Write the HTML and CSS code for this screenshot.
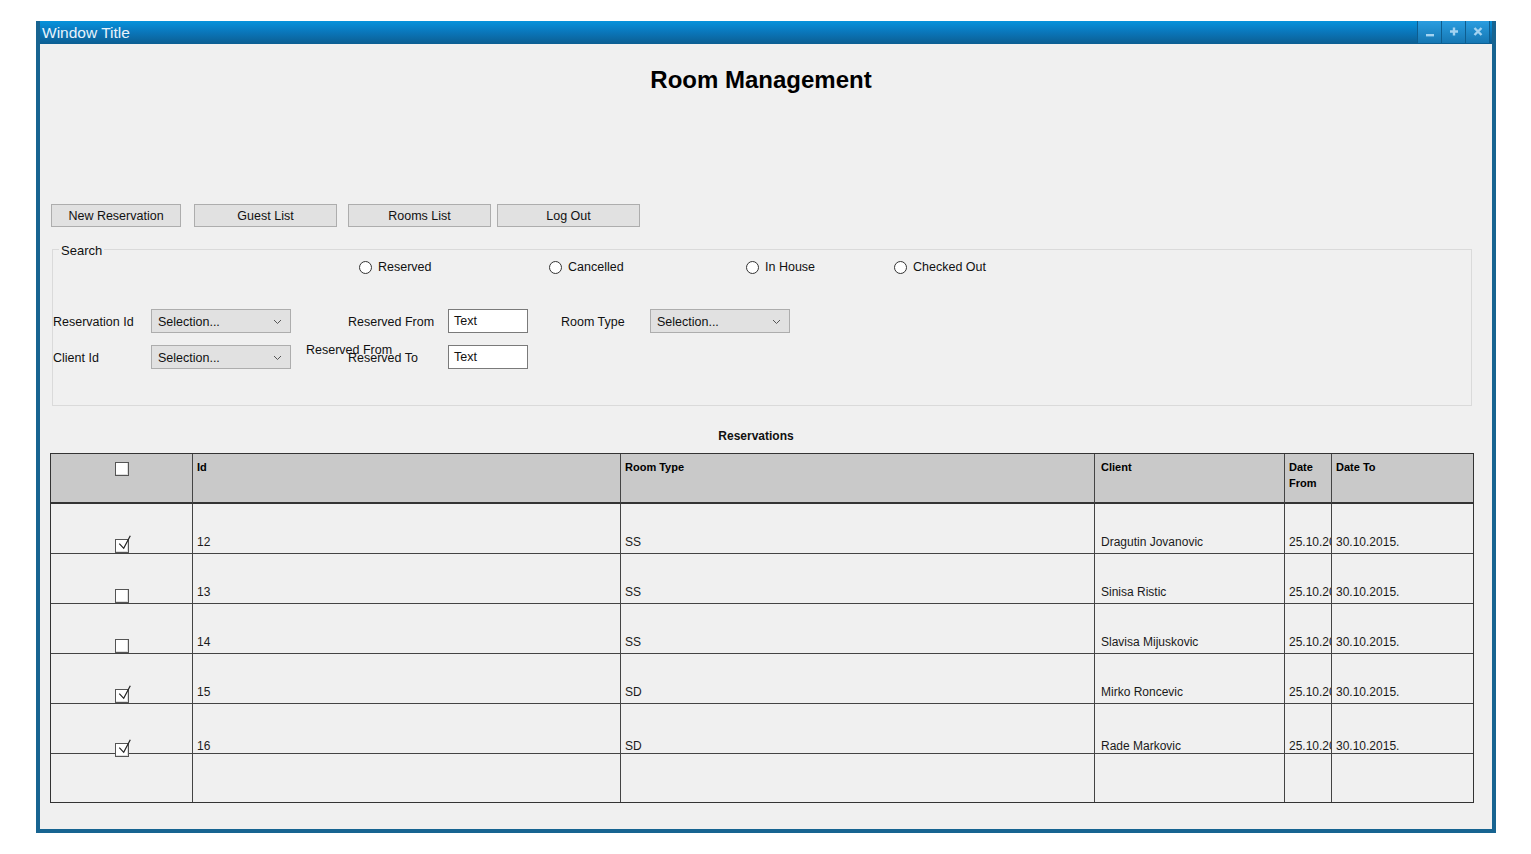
FILE: index.html
```html
<!DOCTYPE html>
<html lang="en">
<head>
<meta charset="utf-8">
<title>Room Management</title>
<link rel="stylesheet" href="styles.css">
</head>
<body>
<div class="window">
  <div class="titlebar">
    <span class="title">Window Title</span>
    <div class="controls">
      <span class="ctl"><svg width="24" height="22" viewBox="0 0 24 22"><rect x="8" y="13" width="8" height="2.4" fill="#a3d3f1"/></svg></span>
      <span class="ctl"><svg width="24" height="22" viewBox="0 0 24 22"><path d="M12 6.5v8M8 10.5h8" stroke="#a3d3f1" stroke-width="2.4"/></svg></span>
      <span class="ctl"><svg width="24" height="22" viewBox="0 0 24 22"><path d="M8.5 7l7 7M15.5 7l-7 7" stroke="#a3d3f1" stroke-width="2.4"/></svg></span>
    </div>
  </div>
  <div class="content">
    <h1 class="heading">Room Management</h1>
    <div class="toolbar">
      <button class="btn btn-new">New Reservation</button>
      <button class="btn btn-guest">Guest List</button>
      <button class="btn btn-rooms">Rooms List</button>
      <button class="btn btn-logout">Log Out</button>
    </div>
    <div class="search">
      <span class="legend">Search</span>
      <div class="radios">
        <label class="radio"><span class="dot"></span>Reserved</label>
        <label class="radio"><span class="dot"></span>Cancelled</label>
        <label class="radio"><span class="dot"></span>In House</label>
        <label class="radio"><span class="dot"></span>Checked Out</label>
      </div>
      <div class="frow">
        <span class="lbl lbl-a">Reservation Id</span>
        <div class="select"><span>Selection...</span><svg width="9" height="6" viewBox="0 0 9 6"><path d="M1 1l3.5 3.5L8 1" fill="none" stroke="#555" stroke-width="1"/></svg></div>
        <span class="lbl lbl-b">Reserved From</span>
        <div class="input">Text</div>
        <span class="lbl lbl-c">Room Type</span>
        <div class="select"><span>Selection...</span><svg width="9" height="6" viewBox="0 0 9 6"><path d="M1 1l3.5 3.5L8 1" fill="none" stroke="#555" stroke-width="1"/></svg></div>
      </div>
      <div class="frow frow-2">
        <span class="lbl lbl-a">Client Id</span>
        <div class="select"><span>Selection...</span><svg width="9" height="6" viewBox="0 0 9 6"><path d="M1 1l3.5 3.5L8 1" fill="none" stroke="#555" stroke-width="1"/></svg></div>
        <span class="lbl lbl-b">Reserved To</span>
        <div class="input">Text</div>
      </div>
      <span class="ghost">Reserved From</span>
    </div>
    <div class="caption">Reservations</div>
    <div class="grid">
      <div class="c h cbc"><span class="cb"></span></div>
      <div class="c h">Id</div>
      <div class="c h">Room Type</div>
      <div class="c h pc">Client</div>
      <div class="c h">Date From</div>
      <div class="c h last">Date To</div>

      <div class="c cbc"><span class="cb"><svg class="tick" width="18" height="18" viewBox="0 0 18 18"><path d="M4.3 9.7L8.7 14.3L15.3 1.7" fill="none" stroke="#222" stroke-width="1.2"/></svg></span></div>
      <div class="c">12</div><div class="c">SS</div><div class="c pc">Dragutin Jovanovic</div><div class="c clip">25.10.2015.</div><div class="c last">30.10.2015.</div>

      <div class="c cbc"><span class="cb"></span></div>
      <div class="c">13</div><div class="c">SS</div><div class="c pc">Sinisa Ristic</div><div class="c clip">25.10.2015.</div><div class="c last">30.10.2015.</div>

      <div class="c cbc"><span class="cb"></span></div>
      <div class="c">14</div><div class="c">SS</div><div class="c pc">Slavisa Mijuskovic</div><div class="c clip">25.10.2015.</div><div class="c last">30.10.2015.</div>

      <div class="c cbc"><span class="cb"><svg class="tick" width="18" height="18" viewBox="0 0 18 18"><path d="M4.3 9.7L8.7 14.3L15.3 1.7" fill="none" stroke="#222" stroke-width="1.2"/></svg></span></div>
      <div class="c">15</div><div class="c">SD</div><div class="c pc">Mirko Roncevic</div><div class="c clip">25.10.2015.</div><div class="c last">30.10.2015.</div>

      <div class="c cbc low"><span class="cb"><svg class="tick" width="18" height="18" viewBox="0 0 18 18"><path d="M4.3 9.7L8.7 14.3L15.3 1.7" fill="none" stroke="#222" stroke-width="1.2"/></svg></span></div>
      <div class="c low">16</div><div class="c low">SD</div><div class="c pc low">Rade Markovic</div><div class="c clip low">25.10.2015.</div><div class="c last low">30.10.2015.</div>

      <div class="c end"></div><div class="c end"></div><div class="c end"></div><div class="c end"></div><div class="c end"></div><div class="c end last"></div>
    </div>
  </div>
</div>
</body>
</html>
```

FILE: styles.css
```css
* { box-sizing: border-box; }

body {
  margin: 0;
  background: #ffffff;
  font-family: "Liberation Sans", Arial, sans-serif;
  color: #111;
}

.window {
  margin: 21px 0 0 36px;
  width: 1460px;
  height: 812px;
  border: 4px solid #176491;
  border-top: 0;
  background: #f0f0f0;
}

.titlebar {
  height: 23px;
  display: flex;
  justify-content: space-between;
  background: linear-gradient(#0693dc, #0a78bd 45%, #0c5e92);
}

.title {
  padding-left: 2px;
  line-height: 24px;
  font-size: 15.5px;
  color: #e8f3fb;
}

.controls {
  display: flex;
  height: 22px;
  margin-right: 2px;
  border-left: 1px solid #0e5d8f;
}

.ctl {
  width: 24px;
  height: 22px;
  display: block;
  background: linear-gradient(#2a9de0, #1677b3);
  border-right: 1px solid #0e5d8f;
}

.ctl svg { display: block; }

.heading {
  margin: 22px 0 0;
  padding-right: 10px;
  text-align: center;
  font-size: 24px;
  line-height: 27px;
  font-weight: bold;
  color: #000;
}

.toolbar {
  display: flex;
  margin-top: 111px;
  padding-left: 11px;
}

.btn {
  height: 23px;
  margin: 0;
  padding: 1px 0 0;
  background: #e1e1e1;
  border: 1px solid #adadad;
  font-family: "Liberation Sans", Arial, sans-serif;
  font-size: 12.5px;
  color: #111;
}

.btn-new { width: 130px; }
.btn-guest { width: 143px; margin-left: 13px; }
.btn-rooms { width: 143px; margin-left: 11px; }
.btn-logout { width: 143px; margin-left: 6px; }

.search {
  position: relative;
  margin: 22px 0 0 12px;
  width: 1420px;
  border: 1px solid #dadada;
  padding: 9px 0 36px;
  font-size: 12.5px;
}

.legend {
  position: absolute;
  left: 6px;
  top: -7px;
  padding: 0 2px;
  background: #f0f0f0;
  line-height: 16px;
  font-size: 13px;
  color: #111;
}

.radios {
  display: grid;
  grid-template-columns: 190px 197px 148px auto;
  padding-left: 306px;
  height: 16px;
}

.radio {
  display: flex;
  align-items: center;
  gap: 6px;
  line-height: 16px;
}

.dot {
  width: 13px;
  height: 13px;
  border: 1px solid #333;
  border-radius: 50%;
  background: #fff;
}

.frow {
  display: flex;
  align-items: center;
  height: 24px;
  margin-top: 34px;
}

.frow-2 { margin-top: 12px; }

.lbl { line-height: 16px; padding-top: 2px; }
.lbl-a { width: 98px; }
.lbl-b { width: 100px; margin-left: 57px; }
.lbl-c { width: 89px; margin-left: 33px; }

.select {
  width: 140px;
  height: 24px;
  display: flex;
  align-items: center;
  justify-content: space-between;
  padding: 1px 8px 0 6px;
  background: #e1e1e1;
  border: 1px solid #adadad;
}

.input {
  width: 80px;
  height: 24px;
  padding-left: 5px;
  line-height: 22px;
  background: #fff;
  border: 1px solid #7a7a7a;
}

.ghost {
  position: absolute;
  left: 253px;
  top: 92px;
  line-height: 16px;
}

.caption {
  margin-top: 23px;
  padding-right: 20px;
  text-align: center;
  font-size: 12px;
  line-height: 14px;
  font-weight: bold;
}

.grid {
  display: grid;
  grid-template-columns: 142px 428px 474px 190px 47px 141px;
  grid-template-rows: 50px 50px 50px 50px 50px 50px 48px;
  margin: 10px 0 0 10px;
  width: 1424px;
  border: 1px solid #333;
  font-size: 12px;
}

.c {
  display: flex;
  align-items: flex-end;
  padding: 0 4px 4px;
  line-height: 14px;
  white-space: nowrap;
  overflow: hidden;
  border-right: 1px solid #444;
  border-bottom: 1px solid #444;
  color: #1a1a1a;
}

.c.last { border-right: 0; }
.c.end { border-bottom: 0; }
.c.pc { padding-left: 6px; }
.c.low { padding-bottom: 0; }

.c.h {
  align-items: flex-start;
  padding-top: 5px;
  background: #c9c9c9;
  border-bottom: 2px solid #333;
  font-size: 11px;
  font-weight: bold;
  line-height: 16px;
  white-space: normal;
  color: #000;
}

.c.cbc {
  justify-content: center;
  padding-bottom: 0;
  overflow: visible;
}

.c.h.cbc { padding-top: 8px; }

.c.clip { text-overflow: clip; }

.cb {
  position: relative;
  display: block;
  width: 14px;
  height: 14px;
  background: #fff;
  border: 1px solid #555;
  box-shadow: inset -1px -1px 0 #ddd;
}

.c.low .cb { margin-bottom: -4px; }

.tick {
  position: absolute;
  left: -1px;
  top: -6px;
}
```
